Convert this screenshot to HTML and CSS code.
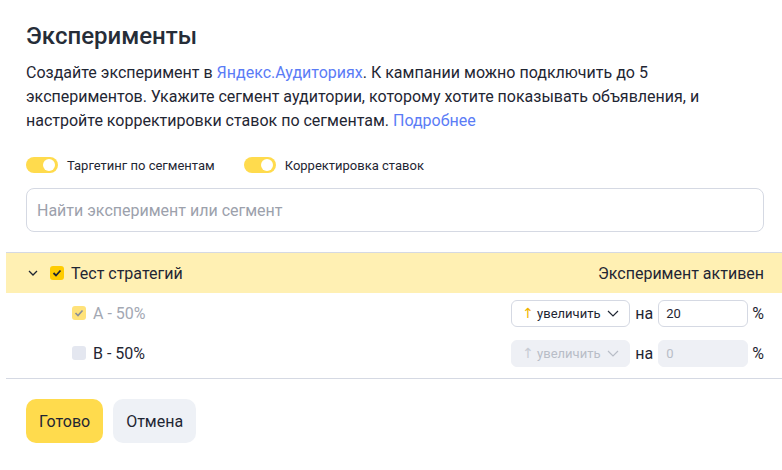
FILE: index.html
```html
<!DOCTYPE html>
<html lang="ru">
<head>
    <meta charset="UTF-8">
    <title>Эксперименты</title>
    <link rel="stylesheet" href="styles.css">
</head>
<body>
    <div class="dialog">
        <div class="head">
            <h1 class="title">Эксперименты</h1>
            <p class="desc">Создайте эксперимент в <a href="#">Яндекс.Аудиториях</a>. К кампании можно подключить до 5 экспериментов. Укажите сегмент аудитории, которому хотите показывать объявления, и настройте корректировки ставок по сегментам. <a href="#">Подробнее</a></p>

            <div class="toggles">
                <label class="toggle"><span class="switch"></span>Таргетинг по сегментам</label>
                <label class="toggle"><span class="switch"></span>Корректировка ставок</label>
            </div>

            <div class="search">Найти эксперимент или сегмент</div>
        </div>

        <div class="list">
            <div class="group">
                <svg class="chevron" width="10" height="6" viewBox="0 0 10 6"><path d="M1 1l4 4 4-4" fill="none" stroke="#1f2633" stroke-width="1.3"/></svg>
                <span class="check on">
                    <svg width="10" height="8" viewBox="0 0 10 8"><path d="M1.5 4l2.5 2.5 4.5-5" fill="none" stroke="#1f2633" stroke-width="1.8"/></svg>
                </span>
                <span class="group-name">Тест стратегий</span>
                <span class="status">Эксперимент активен</span>
            </div>

            <div class="row">
                <span class="check on-disabled">
                    <svg width="10" height="8" viewBox="0 0 10 8"><path d="M1.5 4l2.5 2.5 4.5-5" fill="none" stroke="#8a8f99" stroke-width="1.6"/></svg>
                </span>
                <span class="row-name muted">A - 50%</span>
                <div class="select"><span class="arrow">↑</span>увеличить
                    <svg class="down" width="12" height="7" viewBox="0 0 12 7"><path d="M1 1l5 5 5-5" fill="none" stroke="#1f2633" stroke-width="1.2"/></svg>
                </div>
                <span class="on-word">на</span>
                <div class="num">20</div>
                <span class="pct">%</span>
            </div>

            <div class="row">
                <span class="check off"></span>
                <span class="row-name">B - 50%</span>
                <div class="select disabled"><span class="arrow">↑</span>увеличить
                    <svg class="down" width="12" height="7" viewBox="0 0 12 7"><path d="M1 1l5 5 5-5" fill="none" stroke="#b8bdc7" stroke-width="1.2"/></svg>
                </div>
                <span class="on-word">на</span>
                <div class="num disabled">0</div>
                <span class="pct">%</span>
            </div>
        </div>

        <div class="actions">
            <button class="btn primary">Готово</button>
            <button class="btn">Отмена</button>
        </div>
    </div>
</body>
</html>
```

FILE: styles.css
```css
body {
    margin: 0;
    background: #fff;
    color: #1f2633;
    font-family: Roboto, "Liberation Sans", sans-serif;
}

.dialog {
    padding: 20px 0 0 6px;
}

.head {
    padding: 0 18px 0 20px;
}

.title {
    margin: 0;
    font-size: 24px;
    line-height: 32px;
    font-weight: 500;
    color: #262d38;
}

.desc {
    margin: 9px 0 0;
    font-size: 16px;
    line-height: 24px;
}

.desc a {
    color: #5b7cf6;
    text-decoration: none;
}

.toggles {
    display: flex;
    gap: 29px;
    margin-top: 24px;
    height: 16px;
}

.toggle {
    display: flex;
    align-items: center;
    gap: 9px;
    font-size: 13px;
}

.switch {
    position: relative;
    width: 32px;
    height: 16px;
    border-radius: 8px;
    background: #ffdb4d;
}

.switch::after {
    content: "";
    position: absolute;
    right: 3px;
    top: 2px;
    width: 12px;
    height: 12px;
    border-radius: 50%;
    background: #fff;
}

.search {
    margin-top: 15px;
    height: 44px;
    box-sizing: border-box;
    border: 1px solid #d5d9e3;
    border-radius: 8px;
    padding: 0 10px;
    display: flex;
    align-items: center;
    font-size: 16px;
    color: #9ca1ac;
}

.list {
    margin-top: 20px;
    border-top: 1px solid #d5d9e3;
    border-bottom: 1px solid #d5d9e3;
    padding-bottom: 5px;
}

.group {
    height: 40px;
    background: #fff0b3;
    display: flex;
    align-items: center;
    padding: 0 18px 0 22px;
    font-size: 16px;
}

.chevron {
    margin-right: 12px;
}

.check {
    width: 14px;
    height: 14px;
    border-radius: 3px;
    display: flex;
    align-items: center;
    justify-content: center;
    flex: none;
}

.check.on {
    background: #fc0;
}

.check.on-disabled {
    background: #ffe27a;
}

.check.off {
    background: #e4e7f0;
}

.group-name {
    margin-left: 7px;
}

.status {
    margin-left: auto;
}

.row {
    height: 40px;
    display: flex;
    align-items: center;
    padding: 0 18px 0 66px;
    font-size: 16px;
}

.row-name {
    margin-left: 7px;
    margin-right: auto;
}

.muted {
    color: #a3a8b3;
}

.select {
    width: 119px;
    height: 27px;
    box-sizing: border-box;
    border: 1px solid #d5d9e3;
    border-radius: 6px;
    display: flex;
    align-items: center;
    padding: 0 10px 0 10px;
    font-size: 13px;
}

.select .arrow {
    font-family: "DejaVu Sans", sans-serif;
    font-size: 14px;
    color: #f0b400;
    margin-right: 3px;
}

.select .down {
    margin-left: auto;
}

.select.disabled {
    border-color: #eef0f5;
    background: #eef0f5;
    color: #b8bdc7;
}

.select.disabled .arrow {
    color: #c8ccd4;
}

.on-word {
    margin: 0 5px;
}

.num {
    width: 90px;
    height: 27px;
    box-sizing: border-box;
    border: 1px solid #d5d9e3;
    border-radius: 6px;
    display: flex;
    align-items: center;
    padding: 0 7px;
    font-size: 13px;
}

.num.disabled {
    border-color: #eef0f5;
    background: #eef0f5;
    color: #b8bdc7;
}

.pct {
    margin-left: 4px;
}

.actions {
    display: flex;
    gap: 10px;
    padding: 20px 0 0 20px;
}

.btn {
    height: 44px;
    border: none;
    border-radius: 10px;
    padding: 0 13px;
    font-family: inherit;
    font-size: 16px;
    color: #1f2633;
    background: #eef1f6;
}

.btn.primary {
    background: #ffdb4d;
}
```
